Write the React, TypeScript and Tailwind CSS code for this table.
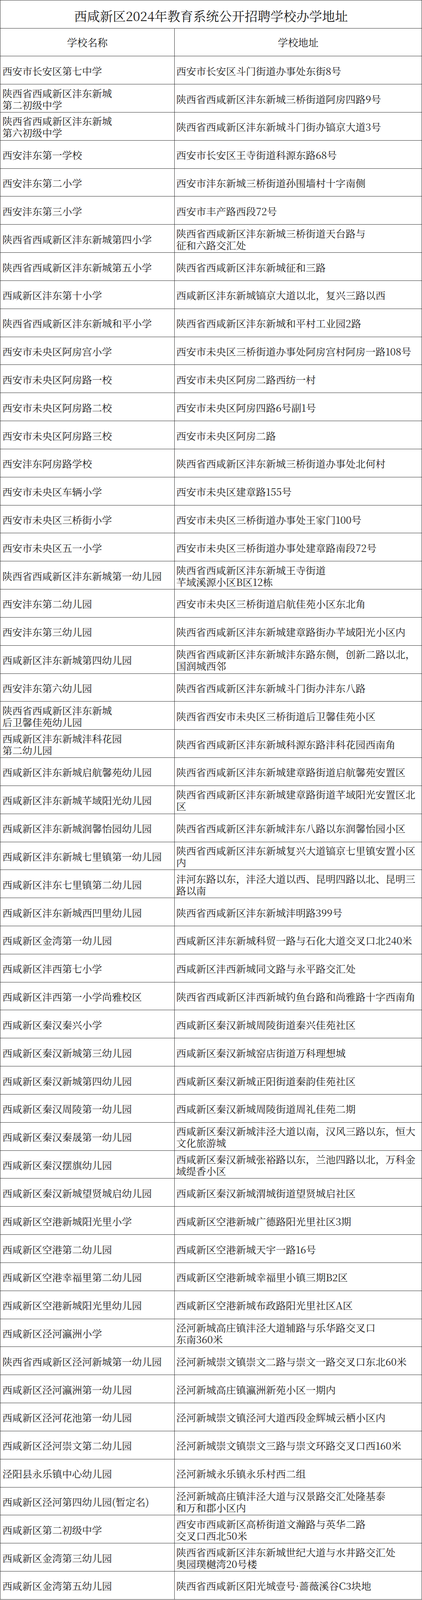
import React from "react";

const rows: [string, string][] = [
  ["西安市长安区第七中学", "西安市长安区斗门街道办事处东街8号"],
  ["陕西省西咸新区沣东新城\n第二初级中学", "陕西省西咸新区沣东新城三桥街道阿房四路9号"],
  ["陕西省西咸新区沣东新城\n第六初级中学", "陕西省西咸新区沣东新城斗门街办镐京大道3号"],
  ["西安沣东第一学校", "西安市长安区王寺街道科源东路68号"],
  ["西安沣东第二小学", "西安市沣东新城三桥街道孙围墙村十字南侧"],
  ["西安沣东第三小学", "西安市丰产路西段72号"],
  ["陕西省西咸新区沣东新城第四小学", "陕西省西咸新区沣东新城三桥街道天台路与\n征和六路交汇处"],
  ["陕西省西咸新区沣东新城第五小学", "陕西省西咸新区沣东新城征和三路"],
  ["西咸新区沣东第十小学", "西咸新区沣东新城镐京大道以北，复兴三路以西"],
  ["陕西省西咸新区沣东新城和平小学", "陕西省西咸新区沣东新城和平村工业园2路"],
  ["西安市未央区阿房宫小学", "西安市未央区三桥街道办事处阿房宫村阿房一路108号"],
  ["西安市未央区阿房路一校", "西安市未央区阿房二路西纺一村"],
  ["西安市未央区阿房路二校", "西安市未央区阿房四路6号副1号"],
  ["西安市未央区阿房路三校", "西安市未央区阿房二路"],
  ["西安沣东阿房路学校", "陕西省西咸新区沣东新城三桥街道办事处北何村"],
  ["西安市未央区车辆小学", "西安市未央区建章路155号"],
  ["西安市未央区三桥街小学", "西安市未央区三桥街道办事处王家门100号"],
  ["西安市未央区五一小学", "西安市未央区三桥街道办事处建章路南段72号"],
  ["陕西省西咸新区沣东新城第一幼儿园", "陕西省西咸新区沣东新城王寺街道\n芊域溪源小区B区12栋"],
  ["西安沣东第二幼儿园", "西安市未央区三桥街道启航佳苑小区东北角"],
  ["西安沣东第三幼儿园", "陕西省西咸新区沣东新城建章路街办芊域阳光小区内"],
  ["西咸新区沣东新城第四幼儿园", "陕西省西咸新区沣东新城沣东路东侧，创新二路以北，\n国润城西邻"],
  ["西安沣东第六幼儿园", "陕西省西咸新区沣东新城斗门街办沣东八路"],
  ["陕西省西咸新区沣东新城\n后卫馨佳苑幼儿园", "陕西省西安市未央区三桥街道后卫馨佳苑小区"],
  ["西咸新区沣东新城沣科花园\n第二幼儿园", "陕西省西咸新区沣东新城科源东路沣科花园西南角"],
  ["西咸新区沣东新城启航馨苑幼儿园", "陕西省西咸新区沣东新城建章路街道启航馨苑安置区"],
  ["西咸新区沣东新城芊域阳光幼儿园", "陕西省西咸新区沣东新城建章路街道芊域阳光安置区北\n区"],
  ["西咸新区沣东新城润馨怡园幼儿园", "陕西省西咸新区沣东新城沣东八路以东润馨怡园小区"],
  ["西咸新区沣东新城七里镇第一幼儿园", "陕西省西咸新区沣东新城复兴大道镐京七里镇安置小区\n内"],
  ["西咸新区沣东七里镇第二幼儿园", "沣河东路以东，沣泾大道以西、昆明四路以北、昆明三\n路以南"],
  ["西咸新区沣东新城西凹里幼儿园", "陕西省西咸新区沣东新城沣明路399号"],
  ["西咸新区金湾第一幼儿园", "西咸新区沣东新城科贸一路与石化大道交叉口北240米"],
  ["西咸新区沣西第七小学", "西咸新区沣西新城同文路与永平路交汇处"],
  ["西咸新区沣西第一小学尚雅校区", "陕西省西咸新区沣西新城钓鱼台路和尚雅路十字西南角"],
  ["西咸新区秦汉秦兴小学", "西咸新区秦汉新城周陵街道秦兴佳苑社区"],
  ["西咸新区秦汉新城第三幼儿园", "西咸新区秦汉新城窑店街道万科理想城"],
  ["西咸新区秦汉新城第四幼儿园", "西咸新区秦汉新城正阳街道秦韵佳苑社区"],
  ["西咸新区秦汉周陵第一幼儿园", "西咸新区秦汉新城周陵街道周礼佳苑二期"],
  ["西咸新区秦汉秦晟第一幼儿园", "西咸新区秦汉新城沣泾大道以南，汉风三路以东，恒大\n文化旅游城"],
  ["西咸新区秦汉摆旗幼儿园", "西咸新区秦汉新城张裕路以东，兰池四路以北，万科金\n域缇香小区"],
  ["西咸新区秦汉新城望贤城启幼儿园", "西咸新区秦汉新城渭城街道望贤城启社区"],
  ["西咸新区空港新城阳光里小学", "西咸新区空港新城广德路阳光里社区3期"],
  ["西咸新区空港第二幼儿园", "西咸新区空港新城天宇一路16号"],
  ["西咸新区空港幸福里第二幼儿园", "西咸新区空港新城幸福里小镇三期B2区"],
  ["西咸新区空港新城阳光里幼儿园", "西咸新区空港新城布政路阳光里社区A区"],
  ["西咸新区泾河瀛洲小学", "泾河新城高庄镇沣泾大道辅路与乐华路交叉口\n东南360米"],
  ["陕西省西咸新区泾河新城第一幼儿园", "泾河新城崇文镇崇文二路与崇文一路交叉口东北60米"],
  ["西咸新区泾河瀛洲第一幼儿园", "泾河新城高庄镇瀛洲新苑小区一期内"],
  ["西咸新区泾河花池第一幼儿园", "泾河新城崇文镇泾河大道西段金辉城云栖小区内"],
  ["西咸新区泾河崇文第二幼儿园", "泾河新城崇文镇崇文三路与崇文环路交叉口西160米"],
  ["泾阳县永乐镇中心幼儿园", "泾河新城永乐镇永乐村西二组"],
  ["西咸新区泾河第四幼儿园(暂定名)", "泾河新城高庄镇沣泾大道与汉景路交汇处隆基泰\n和万和郡小区内"],
  ["西咸新区第二初级中学", "西安市西咸新区高桥街道文瀚路与英华二路\n交叉口西北50米"],
  ["西咸新区金湾第三幼儿园", "陕西省西咸新区沣东新城世纪大道与水井路交汇处\n奥园璞樾湾20号楼"],
  ["西咸新区金湾第五幼儿园", "陕西省西咸新区阳光城壹号·蔷薇溪谷C3块地"],
];

function Lines({ text }: { text: string }) {
  return (
    <div className="leading-[30px]">
      {text.split("\n").map((l, i) => (
        <div key={i} className="whitespace-nowrap">
          {l}
        </div>
      ))}
    </div>
  );
}

export default function App() {
  return (
    <div
      className="w-[1080px] bg-white text-[#1c1c1c]"
      style={{ fontFamily: '"Noto Serif CJK SC", "Noto Sans CJK SC", serif' }}
    >
      <div className="border-t border-l border-[#333]">
        <div className="flex h-[71.5px] items-center justify-center border-b border-r border-[#333] pt-[6px] text-[33px] leading-none">
          西咸新区2024年教育系统公开招聘学校办学地址
        </div>
        <div className="flex h-[71.83px] text-[26px]">
          <div className="flex w-[446px] shrink-0 items-center justify-center border-b border-r border-[#333]">
            学校名称
          </div>
          <div className="flex flex-1 items-center justify-center border-b border-r border-[#333]">
            学校地址
          </div>
        </div>
        {rows.map(([name, addr], i) => (
          <div key={i} className="flex h-[71.83px] text-[25.5px]">
            <div className="flex w-[446px] shrink-0 items-center border-b border-r border-[#333] pl-[5px] pt-[2px]">
              <Lines text={name} />
            </div>
            <div className="flex flex-1 items-center border-b border-r border-[#333] pl-[4px] pt-[2px]">
              <Lines text={addr} />
            </div>
          </div>
        ))}
      </div>
    </div>
  );
}
